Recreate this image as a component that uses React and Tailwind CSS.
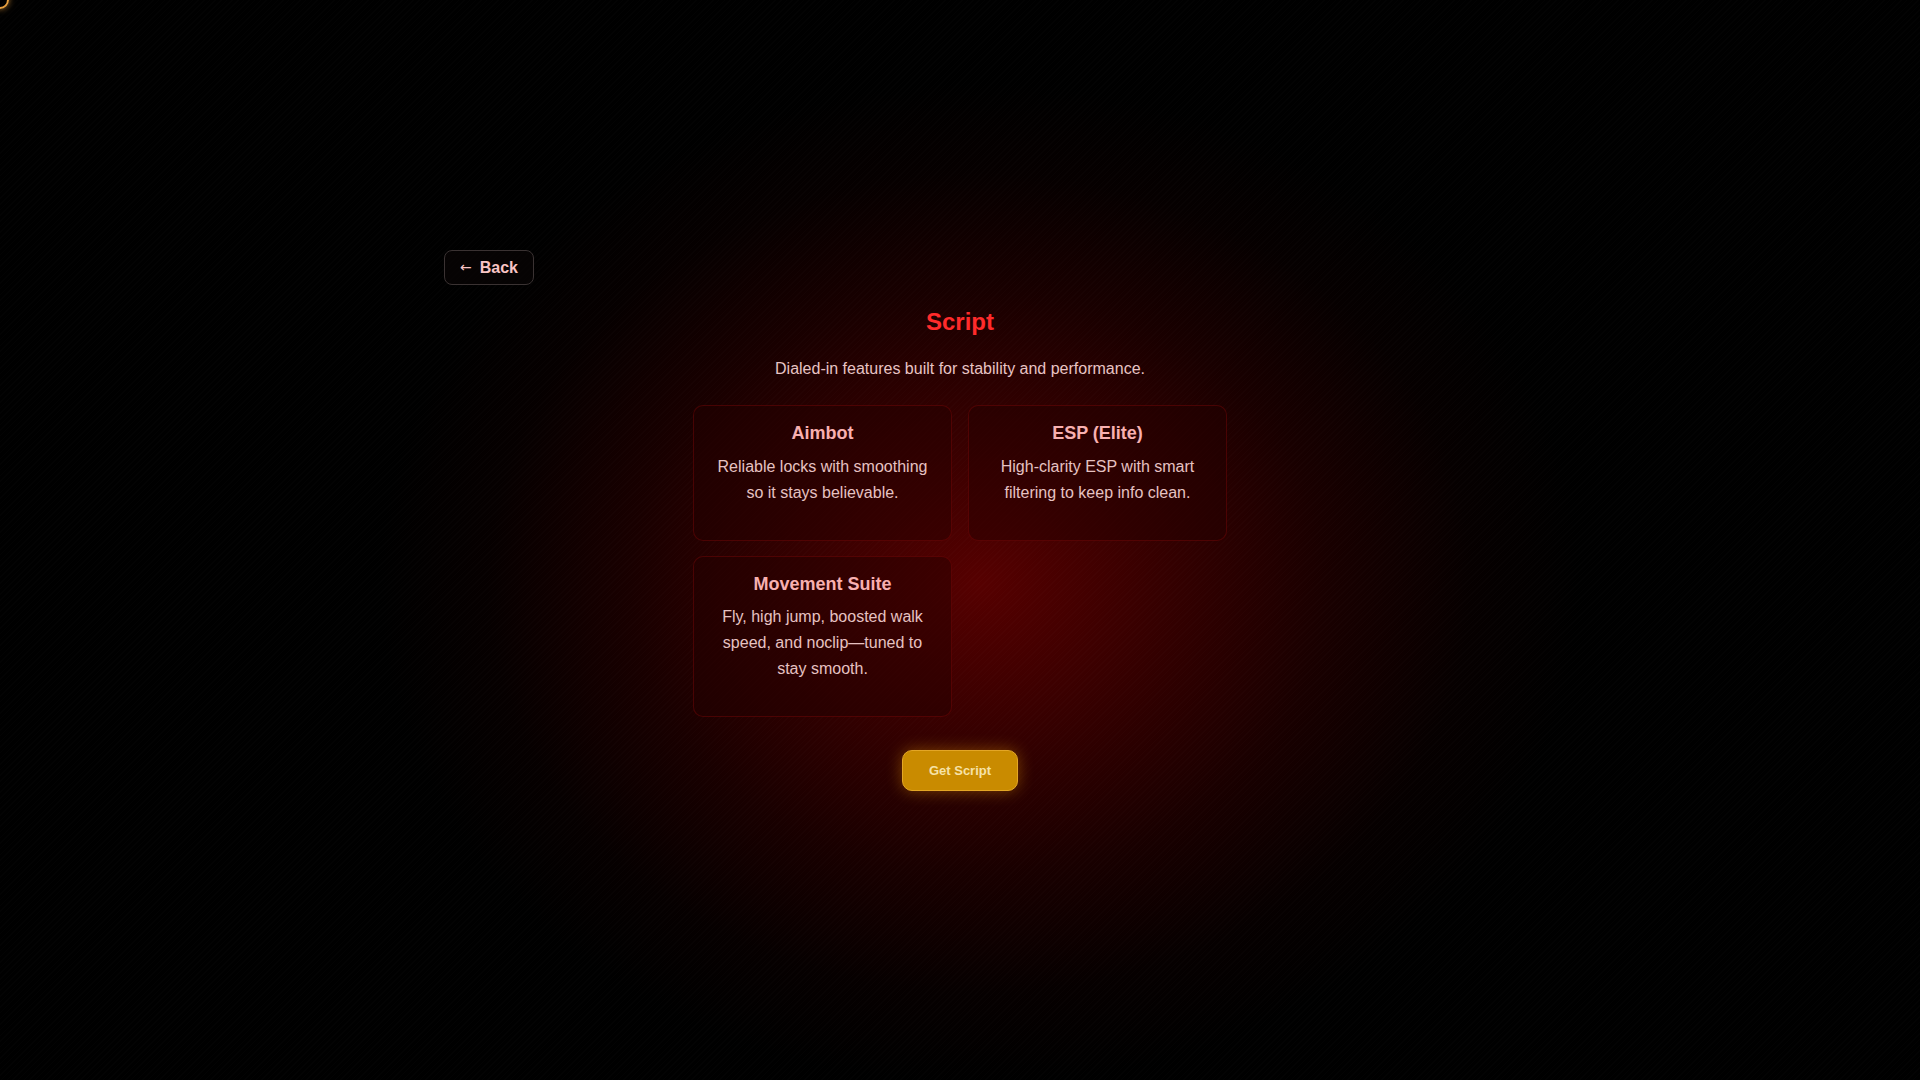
import React from 'react';

const features = [
  {
    title: 'Aimbot',
    text: 'Reliable locks with smoothing so it stays believable.',
  },
  {
    title: 'ESP (Elite)',
    text: 'High-clarity ESP with smart filtering to keep info clean.',
  },
  {
    title: 'Movement Suite',
    text: 'Fly, high jump, boosted walk speed, and noclip—tuned to stay smooth.',
  },
];

const FeatureCard = ({ title, text }) => {
  return (
    <div className="rounded-[10px] border border-[rgba(150,10,10,0.35)] bg-[rgba(35,0,0,0.45)] px-4 pt-[17px] pb-[18px] text-center">
      <h3 className="mb-[9px] text-[18px] font-bold leading-[1.2] text-[#f8b0b0]">
        {title}
      </h3>
      <p className="mb-4 text-[16px] leading-[26px] text-[#e6c2c2]">{text}</p>
    </div>
  );
};

const App = () => {
  return (
    <div
      className="relative min-h-screen w-full overflow-hidden bg-black bg-[radial-gradient(ellipse_600px_500px_at_51%_54%,#560000_0%,#360000_30%,#190000_58%,#060000_82%,#000000_100%)]"
      style={{ fontFamily: '"Liberation Sans", Arial, sans-serif' }}
    >
      {/* subtle diagonal texture */}
      <div className="pointer-events-none absolute inset-0 bg-[repeating-linear-gradient(135deg,rgba(255,255,255,0.012)_0px,rgba(255,255,255,0.012)_1px,transparent_1px,transparent_4px)]" />

      {/* cursor ring */}
      <div className="pointer-events-none absolute left-[-9px] top-[-9px] h-[18px] w-[18px] rounded-full border-2 border-[#e8a040] shadow-[0_0_6px_rgba(232,160,64,0.7)]" />

      <div className="relative mx-auto w-[1032px] pt-[250px]">
        <button
          type="button"
          className="flex h-[35px] items-center gap-[8px] rounded-lg border border-[#3a3232] bg-[rgba(10,5,5,0.6)] px-[15px] text-[16px] font-bold text-[#f8c4c4]"
        >
          <span className="font-['DejaVu_Sans'] text-[14px] font-normal">←</span>
          <span>Back</span>
        </button>

        <div className="mt-[21px] flex flex-col items-center">
          <h1 className="text-[24px] font-bold leading-[32px] text-[#ff2b2b]">Script</h1>
          <p className="mt-[19px] text-[16px] leading-[24px] text-[#e8c4c4]">
            Dialed-in features built for stability and performance.
          </p>

          <div className="mt-[24px] grid w-[534px] grid-cols-2 items-start gap-x-4 gap-y-[15px]">
            {features.map((f) => (
              <FeatureCard key={f.title} title={f.title} text={f.text} />
            ))}
          </div>

          <button
            type="button"
            className="mt-[33px] h-[41px] w-[116px] rounded-[10px] border border-[#e3a626] bg-[#c98b00] text-[13px] font-bold text-[#f6e2a8] shadow-[0_0_16px_rgba(220,140,0,0.45)]"
          >
            Get Script
          </button>
        </div>
      </div>
    </div>
  );
};

export default App;
